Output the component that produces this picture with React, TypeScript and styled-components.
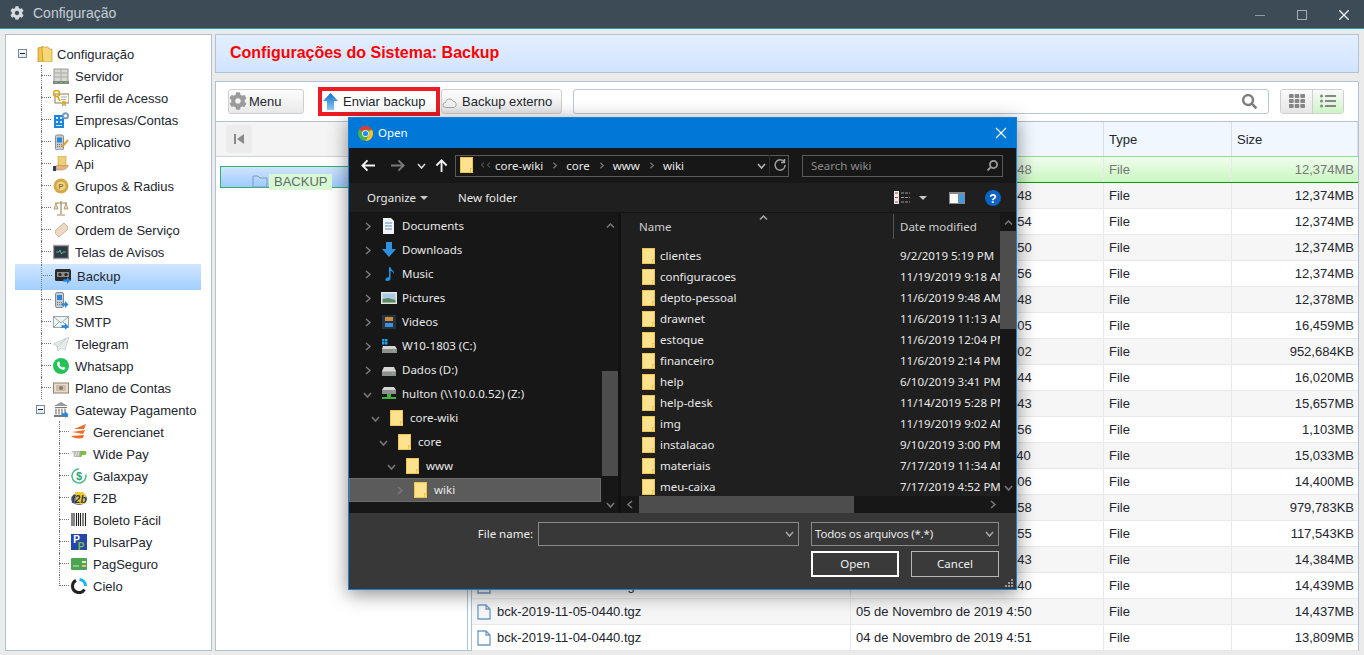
import React from "react";
import styled, { createGlobalStyle } from "styled-components";
import { FaCog, FaSearch, FaTh, FaListUl } from "react-icons/fa";

const Global = createGlobalStyle`
  html, body { margin: 0; padding: 0; height: 100%; overflow: hidden; background: #ebebeb; }
  #root { height: 100%; }
  * { box-sizing: border-box; }
`;

const Window = styled.div`
  position: relative;
  width: 1364px;
  height: 655px;
  display: flex;
  flex-direction: column;
  background: #ebebeb;
  font-family: "Liberation Sans", Arial, sans-serif;
  font-size: 13px;
  color: #23262e;
  overflow: hidden;
`;
const TitleBar = styled.header`
  height: 29px;
  flex: none;
  display: flex;
  align-items: center;
  padding: 0 15px 3px 10px;
  background: #3d4b57;
  border-bottom: 1px solid #1da2b8;
  color: #c6ced5;
  font-size: 14px;
`;
const AppTitle = styled.span`
  margin-left: 9px;
  flex: 1;
`;
const WinControls = styled.div`
  display: flex;
  gap: 32px;
  align-items: center;
  margin-top: 4px;
`;
const Body = styled.div`
  flex: 1;
  min-height: 0;
  display: flex;
  gap: 3px;
  padding: 5px 5px 4px;
`;
const TreePanel = styled.nav`
  width: 207px;
  flex: none;
  background: #fff;
  border: 1px solid #b0c2d3;
  padding-top: 8px;
`;
const TreeRow = styled.div<{ $level: number; $selected?: boolean; $last?: boolean; $line?: boolean }>`
  position: relative;
  height: ${(p) => (p.$selected ? 26 : 22)}px;
  margin: ${(p) => (p.$selected ? "1px 10px -1px 9px" : "0 10px 0 9px")};
  display: flex;
  align-items: center;
  gap: ${(p) => (p.$level === 0 ? 4 : 6)}px;
  padding-left: ${(p) => (p.$level === 0 ? 22 : p.$level === 1 ? 38 : 56) + (p.$selected ? 2 : 0)}px;
  padding-bottom: ${(p) => (p.$selected ? 2 : 0)}px;
  background: ${(p) => (p.$selected ? "linear-gradient(#d0e6ff, #a2cffe)" : "transparent")};
  ${(p) =>
    p.$line
      ? `
    &::before {
      content: "";
      position: absolute;
      left: ${p.$level === 1 ? 26 : 44}px;
      top: ${p.$selected ? 11 : 10}px;
      width: ${p.$selected ? 11 : 10}px;
      border-top: 1px dotted #777;
    }
    &::after {
      content: "";
      position: absolute;
      left: ${p.$level === 1 ? 26 : 44}px;
      top: 0;
      height: ${p.$last ? 11 : p.$selected ? 26 : 22}px;
      border-left: 1px dotted #777;
    }`
      : ""}
`;
const MinusBox = styled.span<{ $level: number }>`
  position: absolute;
  left: ${(p) => (p.$level === 0 ? 3 : 21)}px;
  top: 6px;
  width: 9px;
  height: 9px;
  border: 1px solid #6f8aa5;
  background: linear-gradient(#fff, #dfe6ee);
  &::after {
    content: "";
    position: absolute;
    left: 1px;
    top: 3px;
    width: 5px;
    height: 1px;
    background: #222;
  }
`;
const Content = styled.main`
  flex: 1;
  min-width: 0;
  display: flex;
  flex-direction: column;
  gap: 8px;
`;
const Header = styled.div`
  height: 39px;
  flex: none;
  display: flex;
  align-items: center;
  padding: 0 14px 2px;
  background: linear-gradient(#e3efff, #d1e4fe);
  border: 1px solid #b0c2d3;
`;
const PageTitle = styled.h1`
  margin: 0;
  font-size: 16px;
  font-weight: bold;
  color: #ff0000;
`;
const MainPanel = styled.section`
  flex: 1;
  min-height: 0;
  display: flex;
  flex-direction: column;
  background: #fff;
  border: 1px solid #b0c2d3;
`;
const Toolbar = styled.div`
  height: 40px;
  flex: none;
  display: flex;
  align-items: center;
  padding: 0 14px 1px 12px;
  border-bottom: 1px solid #b0c2d3;
`;
const Btn = styled.button<{ $w: number; $ml?: number; $gap: number }>`
  width: ${(p) => p.$w}px;
  margin-left: ${(p) => p.$ml || 0}px;
  height: 25px;
  display: flex;
  align-items: center;
  gap: ${(p) => p.$gap}px;
  padding: 0;
  font: inherit;
  color: inherit;
  border: 1px solid #cfcfcf;
  border-radius: 3px;
  background: linear-gradient(#fdfdfd, #e9e9e9);
`;
const RedBox = styled.div`
  width: 122px;
  height: 29px;
  margin-left: 14px;
  flex: none;
  display: flex;
  align-items: center;
  gap: 5px;
  padding-left: 1px;
  border: 4px solid #ed1c24;
  background: #fff;
`;
const SearchBox = styled.div`
  flex: 1;
  height: 25px;
  margin: 0 11px;
  display: flex;
  align-items: center;
  justify-content: flex-end;
  padding-right: 11px;
  border: 1px solid #b9c8d6;
  border-radius: 3px;
  color: #7d7d7d;
`;
const ViewToggle = styled.div`
  width: 64px;
  height: 25px;
  flex: none;
  display: grid;
  grid-template-columns: 1fr 1fr;
  border: 1px solid #cfcfcf;
  border-radius: 3px;
  overflow: hidden;
`;
const ViewBtn = styled.div<{ $on?: boolean }>`
  display: flex;
  align-items: center;
  justify-content: center;
  color: #868686;
  border-left: ${(p) => (p.$on ? "1px solid #cfcfcf" : "none")};
  background: ${(p) => (p.$on ? "linear-gradient(#fafafa, #ccf5c4)" : "linear-gradient(#fafafa, #e6e6e6)")};
`;
const Split = styled.div`
  flex: 1;
  min-height: 0;
  display: flex;
  gap: 3px;
`;
const Side = styled.div`
  width: 252px;
  flex: none;
  border-right: 1px solid #a9c3d8;
  display: flex;
  flex-direction: column;
`;
const SideBar = styled.div`
  height: 35px;
  flex: none;
  padding: 3px 0 0 10px;
  background: #f4f4f4;
  border-bottom: 1px solid #c8d5e0;
`;
const SideBtn = styled.div`
  width: 26px;
  height: 28px;
  display: flex;
  align-items: center;
  justify-content: center;
  background: #ececec;
  border-radius: 3px;
`;
const BackupItem = styled.div`
  margin: 9px 0 0 4px;
  height: 22px;
  display: flex;
  align-items: center;
  padding-left: 31px;
  gap: 1px;
  border: 1px solid #2fb26b;
  border-right: none;
  background: linear-gradient(#cfe4ff, #9fcbfd);
`;
const BackupFolder = styled.svg`
  margin-top: 8px;
  flex: none;
`;
const BackupLabel = styled.span`
  height: 16px;
  line-height: 16px;
  margin-top: 9px;
  padding: 0 5px;
  color: #5f6b6b;
  font-size: 13px;
  background: #d9f8d4;
`;
const Grid = styled.div`
  flex: 1;
  min-width: 0;
  border-left: 1px solid #a9c3d8;
  display: flex;
  flex-direction: column;
`;
const Cols = styled.div`
  display: grid;
  grid-template-columns: 379px 253px 128px 1fr;
`;
const HeadRow = styled(Cols)`
  height: 35px;
  flex: none;
  background: #f0f7ff;
  border-bottom: 1px solid #8fe08f;
`;
const HeadCell = styled.div`
  display: flex;
  align-items: center;
  padding-left: 5px;
  padding-top: 1px;
  border-right: 1px solid #d5dfe9;
`;
const Row = styled(Cols)<{ $odd: boolean; $sel: boolean }>`
  height: 26px;
  flex: none;
  background: ${(p) => (p.$sel ? "linear-gradient(#f0fdee, #c9f7c0)" : p.$odd ? "#f6f6f6" : "#fff")};
  border-bottom: 1px solid ${(p) => (p.$sel ? "#0c9c0c" : "#e8e8e8")};
  color: ${(p) => (p.$sel ? "#777" : "inherit")};
`;
const Cell = styled.div<{ $right?: boolean }>`
  display: flex;
  align-items: center;
  gap: 6px;
  padding: 0 ${(p) => (p.$right ? 4 : 5)}px 0 5px;
  white-space: nowrap;
  justify-content: ${(p) => (p.$right ? "flex-end" : "flex-start")};
  border-right: ${(p) => (p.$right ? "none" : "1px solid #e8e8e8")};
`;

/* dialog */
const Dialog = styled.div`
  position: absolute;
  left: 348px;
  top: 117px;
  width: 669px;
  height: 473px;
  display: flex;
  flex-direction: column;
  border: 1px solid #1a80d3;
  background: #383838;
  box-shadow: 0 4px 18px rgba(0, 0, 0, 0.45);
  font-family: "Noto Sans", "Open Sans", sans-serif;
  font-size: 11.5px;
  color: #e8e8e8;
`;
const DlgTitle = styled.div`
  height: 30px;
  flex: none;
  display: flex;
  align-items: center;
  gap: 5px;
  padding: 0 9px 0 9px;
  background: #0078d7;
  color: #fff;
`;
const DlgName = styled.span`
  flex: 1;
  padding-bottom: 2px;
`;
const DlgNav = styled.div`
  height: 35px;
  flex: none;
  display: flex;
  align-items: center;
  padding-left: 12px;
  background: #171717;
`;
const NavArrow = styled.span<{ $w: number }>`
  width: ${(p) => p.$w}px;
  flex: none;
  display: flex;
  align-items: center;
`;
const Address = styled.div`
  width: 334px;
  height: 22px;
  flex: none;
  display: flex;
  align-items: center;
  padding-left: 4px;
  padding-bottom: 1px;
  border: 1px solid #5a5a5a;
`;
const Crumb = styled.span<{ $ml: number }>`
  margin-left: ${(p) => p.$ml}px;
  display: inline-flex;
`;
const Spring = styled.span`
  flex: 1;
`;
const AddrSep = styled.span`
  width: 1px;
  height: 20px;
  margin: 0 3px;
  background: #2b2b2b;
`;
const SearchWiki = styled.div`
  width: 201px;
  height: 22px;
  margin-left: 13px;
  flex: none;
  display: flex;
  align-items: center;
  justify-content: space-between;
  padding: 0 4px 1px 8px;
  border: 1px solid #5a5a5a;
  color: #8a8a8a;
`;
const DlgTools = styled.div`
  height: 30px;
  flex: none;
  display: flex;
  align-items: center;
  padding: 0 15px 0 18px;
  background: #1f1f1f;
  border-bottom: 1px solid #141414;
`;
const OrgCaret = styled.span<{ $ml: number }>`
  margin-left: ${(p) => p.$ml}px;
  width: 0;
  height: 0;
  border-left: 4px solid transparent;
  border-right: 4px solid transparent;
  border-top: 4px solid #c8c8c8;
`;
const ToolLabel = styled.span<{ $ml: number }>`
  margin-left: ${(p) => p.$ml}px;
`;
const ToolIcon = styled.span<{ $ml: number }>`
  margin-left: ${(p) => p.$ml}px;
  display: flex;
`;
const Panes = styled.div`
  height: 300px;
  flex: none;
  display: flex;
  background: #171717;
`;
const NavPane = styled.div`
  width: 272px;
  flex: none;
  display: flex;
  border-right: 3px solid #111;
`;
const NavList = styled.div`
  flex: 1;
  padding-top: 1px;
  min-width: 0;
`;
const NavRow = styled.div<{ $sel?: boolean }>`
  height: 24px;
  display: flex;
  align-items: center;
  margin-right: 1px;
  white-space: nowrap;
  background: ${(p) => (p.$sel ? "#5b5b5b" : "transparent")};
  box-shadow: ${(p) => (p.$sel ? "inset 0 0 0 1px #6c6c6c" : "none")};
`;
const Chevron = styled.span<{ $ml: number }>`
  margin-left: ${(p) => p.$ml}px;
  width: 9px;
  flex: none;
  display: flex;
`;
const NavIcon = styled.span<{ $ml: number }>`
  margin-left: ${(p) => p.$ml}px;
  width: 16px;
  flex: none;
  display: flex;
  justify-content: center;
`;
const NavText = styled.span<{ $ml: number }>`
  margin-left: ${(p) => p.$ml}px;
  padding-bottom: 2px;
`;
const VScroll = styled.div<{ $w: number; $bg: string }>`
  width: ${(p) => p.$w}px;
  flex: none;
  display: flex;
  flex-direction: column;
  background: ${(p) => p.$bg};
`;
const ScrollCap = styled.div<{ $h: number }>`
  height: ${(p) => p.$h}px;
  flex: none;
  display: flex;
  align-items: center;
  justify-content: center;
`;
const Thumb = styled.div<{ $h: number; $mt: number; $mb?: number }>`
  height: ${(p) => p.$h}px;
  margin-top: ${(p) => p.$mt}px;
  margin-bottom: ${(p) => p.$mb || 0}px;
  flex: none;
  background: #4d4d4d;
`;
const ScrollFill = styled.div`
  flex: 1;
`;
const FilePane = styled.div`
  flex: 1;
  min-width: 0;
  display: flex;
  flex-direction: column;
  background: #1f1f1f;
`;
const FileMain = styled.div`
  flex: 1;
  min-height: 0;
  display: flex;
`;
const FileList = styled.div`
  flex: 1;
  min-width: 0;
  overflow: hidden;
`;
const ListHead = styled.div`
  position: relative;
  height: 26px;
  display: grid;
  grid-template-columns: 272px 1fr;
  align-items: center;
  margin-bottom: 6px;
`;
const HeadName = styled.span`
  padding-left: 18px;
  color: #cfcfcf;
`;
const HeadDate = styled.span`
  height: 25px;
  line-height: 25px;
  padding-left: 6px;
  border-left: 1px solid #555;
  color: #cfcfcf;
`;
const SortMark = styled.span`
  position: absolute;
  left: 138px;
  top: 0;
  display: flex;
`;
const FileRow = styled.div`
  height: 21px;
  display: grid;
  grid-template-columns: 39px 233px 1fr;
  align-items: center;
  white-space: nowrap;
`;
const FolderCell = styled.span`
  padding-left: 21px;
  display: flex;
`;
const DateCell = styled.span`
  padding-left: 7px;
  overflow: hidden;
`;
const HScroll = styled.div`
  height: 17px;
  flex: none;
  display: flex;
  align-items: center;
  background: #171717;
`;
const HThumb = styled.div`
  width: 215px;
  height: 100%;
  background: #4d4d4d;
`;
const HCap = styled.div<{ $w: number }>`
  width: ${(p) => p.$w}px;
  flex: none;
  display: flex;
  justify-content: center;
`;
const DlgFoot = styled.div`
  position: relative;
  flex: 1;
  display: grid;
  grid-template-columns: 188px 261px 188px;
  grid-template-rows: 24px 26px;
  column-gap: 12px;
  row-gap: 5px;
  justify-content: end;
  padding: 9px 17px 0 0;
  background: #383838;
`;
const FieldLabel = styled.label`
  justify-self: end;
  align-self: center;
  margin-right: -7px;
  padding-bottom: 2px;
  color: #eee;
`;
const Field = styled.div`
  display: flex;
  align-items: center;
  justify-content: space-between;
  padding: 0 4px 1px 3px;
  border: 1px solid #8a8a8a;
  white-space: nowrap;
  letter-spacing: -0.2px;
`;
const FootButtons = styled.div`
  grid-column: 3;
  display: grid;
  grid-template-columns: 88px 88px;
  column-gap: 12px;
`;
const DlgBtn = styled.button<{ $primary?: boolean }>`
  font: inherit;
  color: #f0f0f0;
  background: #3a3a3a;
  padding: 0 0 2px;
  border: ${(p) => (p.$primary ? "2px solid #fff" : "1px solid #b5b5b5")};
`;
const Grip = styled.svg`
  position: absolute;
  right: 2px;
  bottom: 1px;
`;

const Chev = ({ dir = "r", color = "#7a7a7a", s = 9 }: { dir?: string; color?: string; s?: number }) => {
  const d: Record<string, string> = { r: "M3 1l4 3.5L3 8", d: "M1 3l3.5 4L8 3", u: "M1 6.5L4.5 3 8 6.5", l: "M6 1L2 4.5 6 8" };
  return (
    <svg width={s} height={s} viewBox="0 0 9 9" fill="none" stroke={color} strokeWidth="1.5">
      <path d={d[dir]} />
    </svg>
  );
};

const Folder = () => (
  <svg width="13" height="16" viewBox="0 0 13 16">
    <rect width="13" height="16" fill="#eec44d" />
    <path d="M1 1h11v10h-2v4H1z" fill="#ffe28e" />
    <path d="M11 12h1v3h-1z" fill="#ffe28e" />
  </svg>
);

const Arrow = () => (
  <svg width="8" height="7" viewBox="0 0 6 6" x="8" y="9">
    <path d="M0 2h3V0l3 3-3 3V4H0z" fill="#2a87e0" />
  </svg>
);

const Chrome = () => (
  <svg width="15" height="15" viewBox="0 0 16 16">
    <circle cx="8" cy="8" r="8" fill="#4caf50" />
    <path d="M8 0a8 8 0 016.93 4H8a4 4 0 00-3.46 2L1.6 3.2A8 8 0 018 0z" fill="#e53935" />
    <path d="M14.93 4A8 8 0 018 16l3.46-6A4 4 0 0011.5 6z" fill="#fbc02d" />
    <circle cx="8" cy="8" r="3.6" fill="#fff" />
    <circle cx="8" cy="8" r="2.8" fill="#2a8cea" />
  </svg>
);

const treeIcon: Record<string, React.ReactNode> = {
  root: (
    <>
      <path d="M1 2l5-1.5V15l-5 1z" fill="#f2c544" stroke="#a9842a" strokeWidth=".6" />
      <path d="M5 1h6l1 2h3v13H6z" fill="#f7d878" stroke="#b8912f" strokeWidth=".6" />
    </>
  ),
  server: (
    <>
      <rect x="1" y="1" width="14" height="13" fill="#d8d8d2" stroke="#9a9a94" />
      <path d="M8 1v13M1 5h14M1 9h14" stroke="#aaa" />
      <rect y="13" width="16" height="3" fill="#7d857d" />
      <path d="M2 14.5h2M7 14.5h2M12 14.5h2" stroke="#6ed06e" />
    </>
  ),
  cert: (
    <>
      <rect x="2" y="4" width="14" height="9" fill="#fdfaf0" stroke="#8d7d5c" />
      <path d="M8 7h6M8 9.5h5" stroke="#9db1c8" />
      <circle cx="3.5" cy="3.5" r="3" fill="none" stroke="#d9a915" strokeWidth="1.6" />
      <path d="M4.5 6l2.5 5" stroke="#d9a915" strokeWidth="1.6" />
      <circle cx="11" cy="13" r="2.2" fill="#e8a91c" />
      <path d="M10 15l-.5 1M12 15l.5 1" stroke="#3572b8" />
    </>
  ),
  corp: (
    <>
      <rect x="1" y="3" width="10" height="13" fill="#1c86dc" />
      <path d="M3 5h2v2H3zM7 5h2v2H7zM3 9h2v2H3zM7 9h2v2H7zM3 13h6v1H3z" fill="#cfe8fb" />
      <circle cx="12.5" cy="3.8" r="2.5" fill="none" stroke="#7e9cb8" strokeWidth="2" />
    </>
  ),
  phone: (
    <>
      <rect x="2.5" y="1" width="8" height="15" rx="1.5" fill="#c7ccd0" stroke="#868c90" />
      <rect x="4" y="3.5" width="5" height="5" fill="#2d87d6" />
      <path d="M4 10.5h5M4 12.5h5" stroke="#777" strokeDasharray="1 1" />
      <path d="M15 6l-6 7" stroke="#e0a030" strokeWidth="2" />
    </>
  ),
  api: (
    <>
      <path d="M5 0h8v10H5z" fill="#f0cf78" stroke="#c8a34d" strokeWidth=".6" />
      <path d="M3 10c3-2 5 0 7 0l5-1c1 2-3 5-6 5H3z" fill="#e7b382" stroke="#a87a50" strokeWidth=".5" />
      <rect y="10" width="3" height="5" fill="#27406a" />
    </>
  ),
  coin: (
    <>
      <circle cx="8" cy="8" r="7.5" fill="#d6ad47" />
      <circle cx="8" cy="8" r="5" fill="#ecd48a" stroke="#b98f2e" strokeWidth=".6" />
      <text x="8" y="11" fontSize="8" fontWeight="bold" textAnchor="middle" fill="#a27a22" fontFamily="Liberation Sans">P</text>
    </>
  ),
  scales: (
    <>
      <path d="M8 1v13M2 3h12M4 15h8" stroke="#a08a5c" strokeWidth="1.2" />
      <path d="M3 3L1 9h4zM13 3l-2 6h4z" fill="#e5d8b4" stroke="#a08a5c" strokeWidth=".7" />
    </>
  ),
  ticket: (
    <path d="M11 1l4 4c-1 1-1 2 0 2L6 15l-4-4c1-1 1-2 0-2z" fill="#f0d9c4" stroke="#c9b09b" />
  ),
  monitor: (
    <>
      <rect x=".5" y="1.5" width="15" height="13" fill="#2e3a40" stroke="#a0a0a0" strokeWidth="1.4" />
      <path d="M3 8h3l1-2 1.5 4L10 8h3" stroke="#5fc8c0" fill="none" strokeWidth=".8" />
    </>
  ),
  tape: (
    <>
      <rect y="1" width="16" height="12" rx="1.5" fill="#2b2b2b" />
      <rect x="2" y="4" width="12" height="5" fill="#8c8c8c" />
      <circle cx="5" cy="6.5" r="1.6" fill="#222" />
      <circle cx="11" cy="6.5" r="1.6" fill="#222" />
      <Arrow />
    </>
  ),
  sms: (
    <>
      <rect x="2.5" y="0.5" width="8" height="15" rx="1.5" fill="#c7ccd0" stroke="#868c90" />
      <rect x="4" y="3" width="5" height="5" fill="#2d87d6" />
      <path d="M4 10.5h5M4 12.5h5" stroke="#777" strokeDasharray="1 1" />
      <Arrow />
    </>
  ),
  mail: (
    <>
      <rect x=".5" y="2.5" width="15" height="11" fill="#eef3f5" stroke="#9aa8ae" />
      <path d="M1 3l7 6 7-6M1 13l5-5M15 13l-5-5" fill="none" stroke="#9aa8ae" />
      <Arrow />
    </>
  ),
  plane: <path d="M16 1L0 8l4 2 1 5 3-3 4 2zM4 10l9-7-8 8z" fill="#e6ebe9" stroke="#b7c2bd" strokeWidth=".6" />,
  money: (
    <>
      <rect x=".5" y="3" width="15" height="10" fill="#e8dccb" stroke="#8f8474" />
      <rect x="3" y="5" width="10" height="6" fill="#cdbfa8" />
      <circle cx="8" cy="8" r="2" fill="#8a7d68" />
    </>
  ),
  bank: (
    <>
      <path d="M8 0l7 4H1z" fill="#9a9a9a" />
      <path d="M2 5h12v1H2zM1 13h14v2H1z" fill="#7b7b7b" />
      <path d="M3 6.5v6M6 6.5v6M9 6.5v6M12 6.5v6" stroke="#9a9a9a" strokeWidth="1.6" />
      <Arrow />
    </>
  ),
  gn: (
    <>
      <path d="M15 0L3 5l10 0zM14 6L1 8l11 2zM13 11L0 12c2 2 7 3 12 2z" fill="#ee6b2b" />
    </>
  ),
  wide: (
    <>
      <path d="M1 5h9l-2 6H3z" fill="#b8b8b8" />
      <path d="M3 6l-1 4M5.5 6l-1 4M8 6l-1 4" stroke="#fff" strokeWidth=".7" />
      <path d="M9 5h5c2 0 2 4 0 4h-3l-.5 2H8z" fill="#7cbf4b" />
    </>
  ),
  galax: (
    <>
      <path d="M8 1a7 7 0 106.8 5.5" fill="none" stroke="#4dba8d" strokeWidth="1.5" />
      <text x="8" y="12" fontSize="11" fontWeight="bold" textAnchor="middle" fill="#2aa372" fontFamily="Liberation Sans">$</text>
    </>
  ),
  f2b: (
    <>
      <ellipse cx="8" cy="9" rx="8" ry="6" fill="#5f6f8e" />
      <path d="M4 2h8c3 2 4 7 2 12H5z" fill="#f5c92c" />
      <text x="8" y="13" fontSize="10" fontWeight="bold" fontStyle="italic" textAnchor="middle" fill="#2a3a5c" fontFamily="Liberation Sans">f2b</text>
    </>
  ),
  barcode: (
    <path d="M1 1v14M3 1v14M5.5 1v14M7.5 1v14M9.5 1v14M12 1v14M14.5 1v14" stroke="#222" strokeWidth="1.1" strokeDasharray="13 1" />
  ),
  pulsar: (
    <>
      <rect width="16" height="16" fill="#2546ab" />
      <text x="5.5" y="9" fontSize="10" fontWeight="bold" textAnchor="middle" fill="#fff" fontFamily="Liberation Sans">P</text>
      <text x="10" y="15.5" fontSize="10" fontWeight="bold" textAnchor="middle" fill="#7cc242" fontFamily="Liberation Sans">P</text>
    </>
  ),
  card: (
    <>
      <rect y="2" width="16" height="12" rx="1" fill="#4ca650" />
      <rect x="11" y="5" width="4" height="2" fill="#dfe9d5" />
      <rect x="11" y="9" width="4" height="2" fill="#f4c83f" />
      <rect x="11" y="11" width="4" height="1.5" fill="#3e87d8" />
      <path d="M2 10h6" stroke="#cfe8c8" />
    </>
  ),
  cielo: (
    <>
      <path d="M8.5 1.5A6.5 6.5 0 0114.5 8" fill="none" stroke="#14b5f2" strokeWidth="3" />
      <path d="M13.5 11.5A6.5 6.5 0 011.5 8a6.5 6.5 0 013.5-5.7" fill="none" stroke="#222" strokeWidth="3" />
    </>
  ),
  wa: (
    <>
      <circle cx="8" cy="8" r="8" fill="#25c25a" />
      <path d="M5.2 3.8c.5-.4 1-.3 1.2.2l.6 1.4c.1.3 0 .6-.2.8l-.5.6c.6 1.2 1.5 2.1 2.8 2.8l.6-.6c.2-.2.5-.3.8-.2l1.4.7c.4.2.5.7.2 1.2-.5.9-1.5 1.4-2.5 1.1-3-.8-5-2.9-5.6-5.5-.2-1 .3-2 1.2-2.5z" fill="#fff" />
    </>
  ),
};

const TI = ({ n }: { n: string }) => (
  <svg width="16" height="16" viewBox="0 0 16 16" style={{ flex: "none" }}>
    {treeIcon[n]}
  </svg>
);

const tree: { t: string; i: string; l: number; box?: boolean; sel?: boolean; last?: boolean }[] = [
  { t: "Configuração", i: "root", l: 0, box: true },
  { t: "Servidor", i: "server", l: 1 },
  { t: "Perfil de Acesso", i: "cert", l: 1 },
  { t: "Empresas/Contas", i: "corp", l: 1 },
  { t: "Aplicativo", i: "phone", l: 1 },
  { t: "Api", i: "api", l: 1 },
  { t: "Grupos & Radius", i: "coin", l: 1 },
  { t: "Contratos", i: "scales", l: 1 },
  { t: "Ordem de Serviço", i: "ticket", l: 1 },
  { t: "Telas de Avisos", i: "monitor", l: 1 },
  { t: "Backup", i: "tape", l: 1, sel: true },
  { t: "SMS", i: "sms", l: 1 },
  { t: "SMTP", i: "mail", l: 1 },
  { t: "Telegram", i: "plane", l: 1 },
  { t: "Whatsapp", i: "wa", l: 1 },
  { t: "Plano de Contas", i: "money", l: 1 },
  { t: "Gateway Pagamento", i: "bank", l: 1, box: true },
  { t: "Gerencianet", i: "gn", l: 2 },
  { t: "Wide Pay", i: "wide", l: 2 },
  { t: "Galaxpay", i: "galax", l: 2 },
  { t: "F2B", i: "f2b", l: 2 },
  { t: "Boleto Fácil", i: "barcode", l: 2 },
  { t: "PulsarPay", i: "pulsar", l: 2 },
  { t: "PagSeguro", i: "card", l: 2 },
  { t: "Cielo", i: "cielo", l: 2, last: true },
];

const sizes = ["12,374MB","12,374MB","12,374MB","12,374MB","12,374MB","12,378MB","16,459MB","952,684KB","16,020MB","15,657MB","1,103MB","15,033MB","14,400MB","979,783KB","117,543KB","14,384MB","14,439MB","14,437MB","13,809MB"];
const mins = ["48","48","54","50","56","48","05","02","44","43","56","40","06","58","55","43","40","50","51"];

const navRows: { t: string; chev: "r" | "d"; c: number; k: string }[] = [
  { t: "Documents", chev: "r", c: 14, k: "docs" },
  { t: "Downloads", chev: "r", c: 14, k: "down" },
  { t: "Music", chev: "r", c: 14, k: "music" },
  { t: "Pictures", chev: "r", c: 14, k: "pics" },
  { t: "Videos", chev: "r", c: 14, k: "vid" },
  { t: "W10-1803 (C:)", chev: "r", c: 14, k: "cdrive" },
  { t: "Dados (D:)", chev: "r", c: 14, k: "drive" },
  { t: "hulton (\\\\10.0.0.52) (Z:)", chev: "d", c: 14, k: "net" },
  { t: "core-wiki", chev: "d", c: 22, k: "folder" },
  { t: "core", chev: "d", c: 30, k: "folder" },
  { t: "www", chev: "d", c: 38, k: "folder" },
];

const navIcon: Record<string, React.ReactNode> = {
  docs: (
    <>
      <path d="M2 0h8l3 3v13H2z" fill="#f3f3f3" />
      <path d="M4 5h7M4 8h7M4 11h7" stroke="#4a8fd0" />
    </>
  ),
  down: <path d="M5 0h6v7h4l-7 8-7-8h4z" fill="#2f8fe0" />,
  music: <path d="M8 1h1.5c0 3 4 3 3.5 7-1-2-2-3-3.5-3v8c0 2-5 3-5 .5 0-2 3-2.5 3.5-2z" fill="#1e96e8" />,
  pics: (
    <>
      <rect x="0" y="2" width="16" height="12" fill="#e6e6e6" />
      <rect x="1.5" y="3.5" width="13" height="9" fill="#a9cbe6" />
      <path d="M1.5 9l6-1 7 2v2.5h-13z" fill="#5d8a5d" />
    </>
  ),
  vid: (
    <>
      <rect x="1" y="1" width="14" height="14" fill="#26333f" />
      <rect x="4" y="3" width="8" height="4" fill="#d08b3c" />
      <rect x="4" y="9" width="8" height="4" fill="#3e8fd8" />
    </>
  ),
  cdrive: (
    <>
      <path d="M1 1h2.5v2.5H1zM4 1h2.5v2.5H4zM1 4h2.5v2.5H1zM4 4h2.5v2.5H4z" fill="#1ea0ea" />
      <path d="M2 8h12l2 3v4H1v-4z" fill="#d5d5d5" />
      <rect x="1" y="11" width="15" height="4" fill="#8f8f8f" />
      <rect x="12" y="12.5" width="2" height="1" fill="#5fe05f" />
    </>
  ),
  drive: (
    <>
      <path d="M3 5h10l2 4v5H1V9z" fill="#d5d5d5" />
      <rect x="1" y="9.5" width="14" height="4.5" fill="#8f8f8f" />
      <rect x="11" y="11" width="2" height="1" fill="#5fe05f" />
    </>
  ),
  net: (
    <>
      <path d="M3 1h10l2 3v4H1V4z" fill="#d5d5d5" />
      <rect x="1" y="4" width="14" height="4" fill="#8f8f8f" />
      <path d="M6 8h4v3h5v2H1v-2h5z" fill="#3fb53f" />
    </>
  ),
};

const files: [string, string][] = [
  ["clientes", "9/2/2019 5:19 PM"],
  ["configuracoes", "11/19/2019 9:18 AM"],
  ["depto-pessoal", "11/6/2019 9:48 AM"],
  ["drawnet", "11/6/2019 11:13 AM"],
  ["estoque", "11/6/2019 12:04 PM"],
  ["financeiro", "11/6/2019 2:14 PM"],
  ["help", "6/10/2019 3:41 PM"],
  ["help-desk", "11/14/2019 5:28 PM"],
  ["img", "11/19/2019 9:02 AM"],
  ["instalacao", "9/10/2019 3:00 PM"],
  ["materiais", "7/17/2019 11:34 AM"],
  ["meu-caixa", "7/17/2019 4:52 PM"],
];

const BigArrow = ({ dir, color }: { dir: "l" | "r" | "u"; color: string }) => {
  const d = { l: "M15 7H2M7 1.5L1.5 7 7 12.5", r: "M0 7h13M8 1.5L13.5 7 8 12.5", u: "M7 14V2M1.5 7L7 1.5 12.5 7" }[dir];
  return (
    <svg width="14" height="14" viewBox="0 0 15 15" fill="none" stroke={color} strokeWidth="2">
      <path d={d} />
    </svg>
  );
};

export default function App() {
  return (
    <Window>
      <Global />
      <TitleBar>
        <FaCog size={14} color="#d7dbde" />
        <AppTitle>Configuração</AppTitle>
        <WinControls>
          <svg width="10" height="10" viewBox="0 0 10 10"><path d="M0 5.5h10" stroke="#8f99a2" /></svg>
          <svg width="10" height="10" viewBox="0 0 10 10"><rect x=".5" y=".5" width="9" height="9" fill="none" stroke="#a4adb5" /></svg>
          <svg width="10" height="10" viewBox="0 0 10 10"><path d="M0 0l10 10M10 0L0 10" stroke="#e8ecef" strokeWidth="1.4" /></svg>
        </WinControls>
      </TitleBar>
      <Body>
        <TreePanel>
          {tree.map((r) => (
            <TreeRow key={r.t} $level={r.l} $selected={r.sel} $last={r.last} $line={!r.box}>
              {r.box && <MinusBox $level={r.l} />}
              <TI n={r.i} />
              <span>{r.t}</span>
            </TreeRow>
          ))}
        </TreePanel>
        <Content>
          <Header>
            <PageTitle>Configurações do Sistema: Backup</PageTitle>
          </Header>
          <MainPanel>
            <Toolbar>
              <Btn $w={76} $gap={2}>
                <FaCog size={18} color="#9b9b9b" />
                <span>Menu</span>
              </Btn>
              <RedBox>
                <svg width="15" height="18" viewBox="0 0 15 18">
                  <defs>
                    <linearGradient id="up" x1="0" y1="0" x2="0" y2="1">
                      <stop offset="0" stopColor="#0c6fc9" />
                      <stop offset="1" stopColor="#8fc8f5" />
                    </linearGradient>
                  </defs>
                  <path d="M7.5 1L15 9h-4v9H4V9H0z" fill="url(#up)" />
                </svg>
                <span>Enviar backup</span>
              </RedBox>
              <Btn $w={121} $ml={1} $gap={4}>
                <svg width="16" height="14" viewBox="0 -4 15 14">
                  <path d="M3 9.5a2.5 2.5 0 010-5 4 4 0 017.5-1.5A3.5 3.5 0 0112 9.5z" fill="#f2f2f2" stroke="#a9a9a9" />
                </svg>
                <span>Backup externo</span>
              </Btn>
              <SearchBox>
                <FaSearch size={15} />
              </SearchBox>
              <ViewToggle>
                <ViewBtn><FaTh size={16} /></ViewBtn>
                <ViewBtn $on><FaListUl size={16} /></ViewBtn>
              </ViewToggle>
            </Toolbar>
            <Split>
              <Side>
                <SideBar>
                  <SideBtn>
                    <svg width="12" height="12" viewBox="0 0 12 12">
                      <rect x="1" y="1" width="2" height="10" fill="#8a8a8a" />
                      <path d="M11 1v10L4 6z" fill="#8a8a8a" />
                    </svg>
                  </SideBtn>
                </SideBar>
                <BackupItem>
                  <BackupFolder width="16" height="14" viewBox="0 0 16 14" fill="none" stroke="#7d9dbb">
                    <path d="M1 13V2h5l2 2h7v9z" />
                  </BackupFolder>
                  <BackupLabel>BACKUP</BackupLabel>
                </BackupItem>
              </Side>
              <Grid>
                <HeadRow>
                  <HeadCell>Name</HeadCell>
                  <HeadCell>Date</HeadCell>
                  <HeadCell>Type</HeadCell>
                  <HeadCell>Size</HeadCell>
                </HeadRow>
                {sizes.map((s, i) => {
                  const day = String(22 - i).padStart(2, "0");
                  return (
                    <Row key={i} $odd={i % 2 === 1} $sel={i === 0}>
                      <Cell>
                        <svg width="14" height="16" viewBox="0 0 14 16" fill="none" stroke="#6d9cc4" strokeWidth="1.3">
                          <path d="M1 1h8l4 4v10H1zM9 1v4h4" />
                        </svg>
                        <span>{`bck-2019-11-${day}-0440.tgz`}</span>
                      </Cell>
                      <Cell>{`${day} de Novembro de 2019 4:${mins[i]}`}</Cell>
                      <Cell>File</Cell>
                      <Cell $right>{s}</Cell>
                    </Row>
                  );
                })}
              </Grid>
            </Split>
          </MainPanel>
        </Content>
      </Body>

      <Dialog>
        <DlgTitle>
          <Chrome />
          <DlgName>Open</DlgName>
          <svg width="12" height="12" viewBox="0 0 12 12"><path d="M1 1l10 10M11 1L1 11" stroke="#fff" strokeWidth="1.1" /></svg>
        </DlgTitle>
        <DlgNav>
          <NavArrow $w={30}><BigArrow dir="l" color="#f2f2f2" /></NavArrow>
          <NavArrow $w={26}><BigArrow dir="r" color="#7a7a7a" /></NavArrow>
          <NavArrow $w={18}><Chev dir="d" color="#d8d8d8" /></NavArrow>
          <NavArrow $w={20}><BigArrow dir="u" color="#f2f2f2" /></NavArrow>
          <Address>
            <Folder />
            <Crumb $ml={7}><Chev dir="l" color="#6a6a6a" s={6} /></Crumb>
            <Chev dir="l" color="#6a6a6a" s={6} />
            <Crumb $ml={3}>core-wiki</Crumb>
            <Crumb $ml={8}><Chev dir="r" color="#777" s={7} /></Crumb>
            <Crumb $ml={8}>core</Crumb>
            <Crumb $ml={8}><Chev dir="r" color="#777" s={7} /></Crumb>
            <Crumb $ml={8}>www</Crumb>
            <Crumb $ml={8}><Chev dir="r" color="#777" s={7} /></Crumb>
            <Crumb $ml={8}>wiki</Crumb>
            <Spring />
            <Chev dir="d" color="#b8b8b8" />
            <AddrSep />
            <svg width="14" height="14" viewBox="0 0 14 14" fill="none" stroke="#a0a0a0" strokeWidth="1.5" style={{ marginRight: 1 }}>
              <path d="M11.5 4A5.2 5.2 0 107 12.2 5.2 5.2 0 0012 7M11.5 1v3.5H8" />
            </svg>
          </Address>
          <SearchWiki>
            <span>Search wiki</span>
            <FaSearch size={11} color="#9a9a9a" style={{ transform: "scaleX(-1)" }} />
          </SearchWiki>
        </DlgNav>
        <DlgTools>
          <span>Organize</span>
          <OrgCaret $ml={4} />
          <ToolLabel $ml={30}>New folder</ToolLabel>
          <Spring />
          <svg width="16" height="14" viewBox="0 0 16 14">
            <rect width="5" height="13" fill="#e8e8e8" />
            <path d="M1 2h3M1 6.5h3M1 11h3" stroke="#c04040" />
            <path d="M7 2h9M7 6.5h9M7 11h9" stroke="#9a9a9a" strokeDasharray="3 1" />
          </svg>
          <OrgCaret $ml={9} />
          <ToolIcon $ml={22}>
            <svg width="16" height="12" viewBox="0 0 16 12">
              <rect width="16" height="12" fill="#8a8a8a" />
              <rect x="1" y="2" width="8" height="9" fill="#fff" />
              <rect x="10" y="2" width="5" height="9" fill="#3f9be8" />
            </svg>
          </ToolIcon>
          <ToolIcon $ml={20}>
            <svg width="16" height="16" viewBox="0 0 16 16">
              <circle cx="8" cy="8" r="8" fill="#0b63c4" />
              <text x="8" y="12.5" fontSize="12" fontWeight="bold" textAnchor="middle" fill="#fff" fontFamily="Liberation Sans">?</text>
            </svg>
          </ToolIcon>
        </DlgTools>
        <Panes>
          <NavPane>
            <NavList>
              {navRows.map((r) => (
                <NavRow key={r.t}>
                  <Chevron $ml={r.c}><Chev dir={r.chev} /></Chevron>
                  <NavIcon $ml={r.k === "folder" ? 8 : 9}>
                    {r.k === "folder" ? (
                      <Folder />
                    ) : (
                      <svg width="16" height="16" viewBox="0 0 16 16">{navIcon[r.k]}</svg>
                    )}
                  </NavIcon>
                  <NavText $ml={r.k === "folder" ? 6 : 5}>{r.t}</NavText>
                </NavRow>
              ))}
              <NavRow $sel>
                <Chevron $ml={46}><Chev dir="r" /></Chevron>
                <NavIcon $ml={8}><Folder /></NavIcon>
                <NavText $ml={6}>wiki</NavText>
              </NavRow>
            </NavList>
            <VScroll $w={16} $bg="#171717">
              <ScrollCap $h={24}><Chev dir="u" /></ScrollCap>
              <Thumb $h={105} $mt={134} />
              <ScrollFill />
              <ScrollCap $h={17}><Chev dir="d" /></ScrollCap>
            </VScroll>
          </NavPane>
          <FilePane>
            <FileMain>
              <FileList>
                <ListHead>
                  <HeadName>Name</HeadName>
                  <HeadDate>Date modified</HeadDate>
                  <SortMark><Chev dir="u" color="#aaa" /></SortMark>
                </ListHead>
                {files.map(([n, d]) => (
                  <FileRow key={n}>
                    <FolderCell><Folder /></FolderCell>
                    <span>{n}</span>
                    <DateCell>{d}</DateCell>
                  </FileRow>
                ))}
              </FileList>
              <VScroll $w={16} $bg="#171717">
                <ScrollCap $h={18}><Chev dir="u" /></ScrollCap>
                <Thumb $h={98} $mt={0} />
                <ScrollFill />
                <ScrollCap $h={17}><Chev dir="d" /></ScrollCap>
              </VScroll>
            </FileMain>
            <HScroll>
              <HCap $w={18}><Chev dir="l" /></HCap>
              <HThumb />
              <ScrollFill />
              <HCap $w={48}><Chev dir="r" /></HCap>
            </HScroll>
          </FilePane>
        </Panes>
        <DlgFoot>
          <FieldLabel>File name:</FieldLabel>
          <Field>
            <span />
            <Chev dir="d" color="#a8a8a8" />
          </Field>
          <Field>
            <span>Todos os arquivos (*.*)</span>
            <Chev dir="d" color="#a8a8a8" />
          </Field>
          <FootButtons>
            <DlgBtn $primary>Open</DlgBtn>
            <DlgBtn>Cancel</DlgBtn>
          </FootButtons>
          <Grip width="10" height="10" viewBox="0 0 10 10" fill="#9a9a9a">
            <path d="M7 1h2v2H7zM4 4h2v2H4zM7 4h2v2H7zM1 7h2v2H1zM4 7h2v2H4zM7 7h2v2H7z" />
          </Grip>
        </DlgFoot>
      </Dialog>
    </Window>
  );
}
